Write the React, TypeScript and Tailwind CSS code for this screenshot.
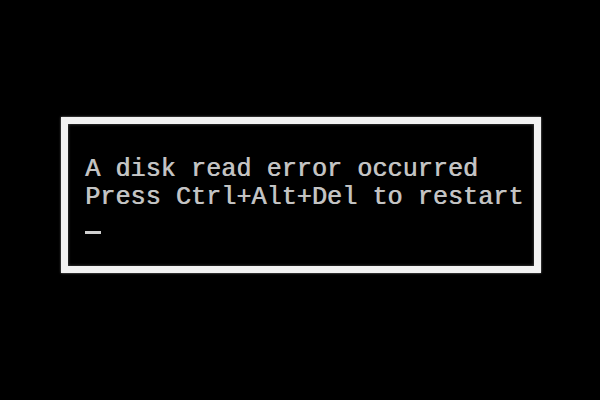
import React from "react";

export default function App() {
  return (
    <div className="w-[600px] h-[400px] bg-black pt-[117px] pl-[61px] overflow-hidden">
      <div className="w-[480px] h-[156px] bg-[#f2f2f2] p-[7px] shadow-[0_0_2px_#888]">
        <div
          className="w-full h-full bg-black pt-[32px] pl-[17px] text-[#c4c4c4] text-[25.2px] leading-[28px] [text-shadow:0.7px_0_0.3px_#b0b0b0] shadow-[inset_0_0_3px_#555]"
          style={{ fontFamily: '"Liberation Mono", "DejaVu Sans Mono", monospace' }}
        >
          <div className="whitespace-pre">A disk read error occurred</div>
          <div className="whitespace-pre">Press Ctrl+Alt+Del to restart</div>
          <div className="w-[16px] h-[3px] bg-[#cfcfcf] mt-[19px]"></div>
        </div>
      </div>
    </div>
  );
}
